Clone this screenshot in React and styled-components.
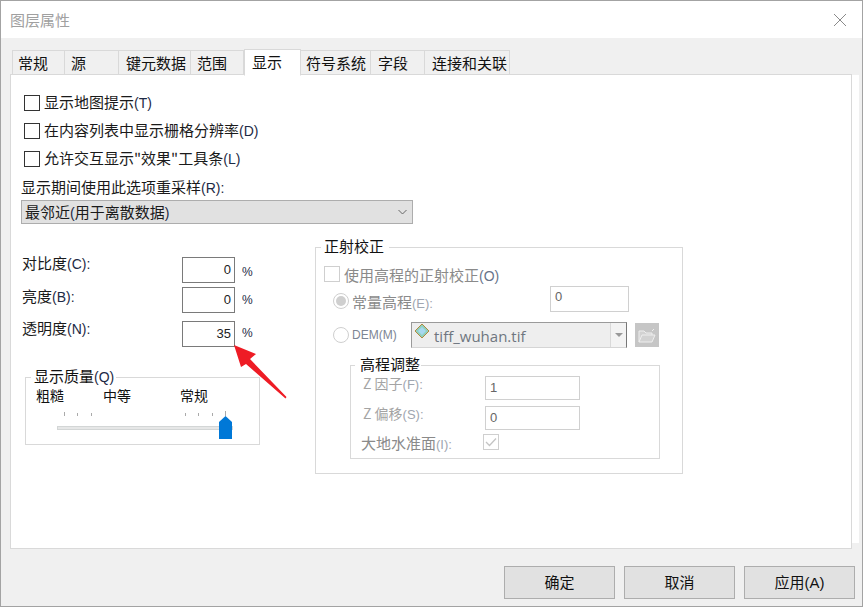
import React from "react";
import styled, { createGlobalStyle } from "styled-components";

const Global = createGlobalStyle`
  html, body { margin: 0; padding: 0; background: #f0f0f0; }
  body { font-family: "Noto Sans CJK SC", "Liberation Sans", sans-serif; font-size: 15px; color: #1a1a1a; text-autospace: no-autospace; }
  * { box-sizing: border-box; }
`;

const Win = styled.div`
  width: 863px; height: 607px; position: relative; overflow: hidden;
  display: flex; flex-direction: column;
  background: #f0f0f0; border: 1px solid #a3a3a3;
`;
const EdgeLeak = styled.div`
  position: absolute; left: ${p => p.$x}px; width: ${p => p.$w}px; height: 1px;
  ${p => p.$bottom ? "bottom: -1px;" : "top: -1px;"}
  background: repeating-linear-gradient(90deg, #3a3a3a 0 5px, #8a8a8a 5px 7px, #3a3a3a 7px 11px, #a3a3a3 11px 14px);
`;
const TitleBar = styled.div`
  height: 37px; flex: none; background: #fff;
  display: flex; align-items: center; justify-content: space-between;
  padding: 0 14px 0 9px; color: #a0a0a0; line-height: 34px;
`;
const Close = styled.svg`width: 14px; height: 14px; display: block; margin-right: 1px;`;
const Tabs = styled.div`
  height: 37px; flex: none; display: flex; align-items: flex-end; padding-left: 11px; position: relative; z-index: 1;
`;
const Tab = styled.div`
  width: ${p => p.$w}px; height: ${p => p.$active ? 27 : 25}px;
  background: ${p => p.$active ? "#fff" : "#f0f0f0"};
  border: 1px solid #d9d9d9; border-left-width: ${p => p.$first || p.$active ? 1 : 0}px;
  border-bottom: ${p => p.$active ? "1px solid #fff" : "1px solid #d9d9d9"};
  margin-bottom: ${p => p.$active ? -1 : 0}px;
  padding-left: ${p => p.$pad}px; line-height: 23px; white-space: nowrap; color: #111;
`;
const Panel = styled.div`
  width: 842px; height: 475px; margin-left: 9px; flex: none; background: #fff;
  border: 1px solid #d9d9d9; margin-top: -1px; padding: 14px 0 0 10px; position: relative;
  &::after { content: ""; position: absolute; left: 100%; top: 0; width: 7px; height: 468px; background: #fff; margin-left: 1px; }
`;
const Mn = styled.span`font-family: "Liberation Sans", sans-serif; font-size: 14px; color: ${p => p.$c || "#1d2a45"};`;
const CheckRow = styled.div`
  height: 28px; display: flex; align-items: center; gap: 4px; padding-left: 3px; white-space: nowrap;
`;
const CheckText = styled.span`padding-bottom: 3px;`;
const Box = styled.span`
  width: 16px; height: 16px; flex: none; background: #fff;
  border: 1px solid ${p => p.$off ? "#cfcfcf" : "#333"}; display: flex; align-items: center; justify-content: center;
`;
const Caption = styled.div`height: 26px; line-height: 26px; margin-top: 1px; white-space: nowrap;`;
const Select = styled.div`
  width: 392px; height: 24px; background: #e1e1e1; border: 1px solid #adadad;
  display: flex; align-items: center; justify-content: space-between; padding: 0 5px 0 3px; line-height: 22px;
`;
const Columns = styled.div`display: flex; align-items: flex-start; margin-top: 23px;`;
const Left = styled.div`width: 294px; flex: none; padding-top: 10px;`;
const Field = styled.div`
  display: flex; width: 240px; height: ${p => p.$h}px; margin-bottom: ${p => p.$mb}px; align-items: flex-start;
`;
const FieldLabel = styled.div`width: 161px; padding-left: 1px; line-height: 20px; margin-top: ${p => p.$dy}px; white-space: nowrap;`;
const NumBox = styled.div`
  width: 53px; height: 26px; border: 1px solid #7a7a7a; background: #fff; text-align: right;
  padding-right: 3px; line-height: 24px; font-family: "Liberation Sans", sans-serif; font-size: 13px; color: #222;
`;
const Pct = styled.span`
  margin-left: 7px; font-family: "Liberation Sans", sans-serif; font-size: 12px; line-height: ${p => p.$lh}px; color: #1d2a45;
`;
const Quality = styled.fieldset`
  width: 235px; height: 76px; margin: 22px 0 0 4px; padding: 0; border: 1px solid #d9d9d9; min-width: 0;
`;
const Legend = styled.legend`
  margin-left: ${p => p.$ml}px; padding: 0 ${p => p.$pr}px 0 ${p => p.$pl}px; line-height: 14px; font-size: 15px; color: #111; white-space: nowrap; height: 16px;
`;
const Ends = styled.div`
  display: grid; grid-template-columns: 67px 77px auto; padding-left: 10px; margin-top: -1px; line-height: 22px; font-size: 14px; color: #111;
`;
const Slider = styled.svg`display: block; width: 233px; height: 34px; margin-top: 2px;`;
const Ortho = styled.fieldset`
  width: 368px; height: 235px; margin: -8px 0 0 0; padding: 0 0 0 8px; border: 1px solid #d9d9d9; min-width: 0; color: #8a8a8a;
`;
const OrthoCheck = styled.div`display: flex; align-items: center; gap: 4px; height: 18px; margin-top: 10px; white-space: nowrap;`;
const Row = styled.div`display: flex; align-items: center; height: ${p => p.$h}px; margin-top: ${p => p.$mt || 0}px; padding-left: 9px;`;
const Radio = styled.span`
  width: 16px; height: 16px; border-radius: 50%; border: 1px solid #cfcfcf; background: #fff; flex: none;
  display: flex; align-items: center; justify-content: center; margin: ${p => p.$dy || 0}px 3px 0 0;
  &::after { content: ""; width: 10px; height: 10px; border-radius: 50%; background: ${p => p.$on ? "#cfcfcf" : "transparent"}; }
`;
const RowLabel = styled.span`width: 198px; white-space: nowrap; padding-top: 4px;`;
const DemLabel = styled.span`width: 59px; font-family: "Liberation Sans", sans-serif; font-size: 12px; color: #7d8594;`;
const Disabled = styled.div`
  width: ${p => p.$w}px; height: ${p => p.$h || 26}px; border: 1px solid #d0d0d0; background: #fff; padding-left: 4px;
  font-family: "Liberation Sans", sans-serif; font-size: 13px; line-height: ${p => p.$lh || 22}px; color: #666;
`;
const Combo = styled.div`
  width: 216px; height: 26px; background: #eee; border: 1px solid #9a9a9a; border-bottom-color: #d5d5d5; border-right-color: #777;
  display: flex; align-items: center; color: #6f7680; font-family: "Open Sans", "Liberation Sans", sans-serif; font-size: 15px; padding-left: 1px; position: relative;
`;
const ComboText = styled.span`margin-left: 3px; padding-top: 2px;`;
const ComboIcon = styled.svg`width: 18px; height: 16px; flex: none; margin-top: -8px;`;
const ComboBtn = styled.span`
  position: absolute; right: 0; top: 0; bottom: 0; width: 16px; background: #f3f3f3; border-left: 1px solid #d9d9d9;
  display: flex; align-items: center; justify-content: center;
  &::after { content: ""; border: 4px solid transparent; border-top: 4px solid #999; border-bottom: 0; }
`;
const FolderBtn = styled.span`
  width: 24px; height: 24px; background: #c6c6c6; margin-left: 8px; display: flex; align-items: center; justify-content: center;
`;
const Adjust = styled.fieldset`
  width: 310px; height: 102px; margin: 9px 0 0 26px; padding: 0; border: 1px solid #d9d9d9; min-width: 0;
`;
const AdjustRow = styled.div`display: flex; height: ${p => p.$h}px; margin-top: ${p => p.$mt}px; align-items: flex-start;`;
const AdjustLabel = styled.span`
  width: 134px; padding-left: 12px; color: #a4a4a4; font-size: 14px; line-height: 18px; white-space: nowrap; margin-top: -2px;
`;
const GeoidLabel = styled.span`
  width: 132px; padding-left: 10px; color: #8a8a8a; font-size: 15px; line-height: 18px; white-space: nowrap;
`;
const SmallMn = styled.span`font-family: "Liberation Sans", sans-serif; font-size: 13px; color: #a0a6b0;`;
const Footer = styled.div`
  display: flex; justify-content: flex-end; gap: 9px; padding: 17px 7px 0 0;
`;
const Btn = styled.div`
  width: 111px; height: 33px; background: #e1e1e1; border: 1px solid #adadad; text-align: center; line-height: 30px; color: #111;
`;
const BtnLatin = styled.span`font-family: "Liberation Sans", sans-serif;`;
const Arrow = styled.svg`position: absolute; left: 230px; top: 343px; width: 60px; height: 60px;`;

const Check = ({ children }) => (
  <CheckRow><Box /><CheckText>{children}</CheckText></CheckRow>
);

export default function App() {
  return (
    <>
      <Global />
      <Win>
        <EdgeLeak $x={417} $w={74} />
        <EdgeLeak $x={364} $w={200} $bottom />
        <TitleBar>
          图层属性
          <Close viewBox="0 0 14 14"><path d="M1 1L13 13M13 1L1 13" stroke="#8a8a8a" strokeWidth="1" fill="none" /></Close>
        </TitleBar>
        <Tabs>
          <Tab $w={53} $pad={5} $first>常规</Tab>
          <Tab $w={54} $pad={6}>源</Tab>
          <Tab $w={72} $pad={7}>键元数据</Tab>
          <Tab $w={53} $pad={6}>范围</Tab>
          <Tab $w={57} $pad={7} $active>显示</Tab>
          <Tab $w={70} $pad={5}>符号系统</Tab>
          <Tab $w={54} $pad={7}>字段</Tab>
          <Tab $w={85} $pad={7}>连接和关联</Tab>
        </Tabs>
        <Panel>
          <Check>显示地图提示<Mn>(T)</Mn></Check>
          <Check>在内容列表中显示栅格分辨率<Mn>(D)</Mn></Check>
          <Check>允许交互显示"效果"工具条<Mn>(L)</Mn></Check>
          <Caption>显示期间使用此选项重采样<Mn>(R):</Mn></Caption>
          <Select>
            <span>最邻近<Mn>(</Mn>用于离散数据<Mn>)</Mn></span>
            <svg width="9" height="6" viewBox="0 0 9 6"><path d="M0.5 1L4.5 5L8.5 1" stroke="#666" fill="none" /></svg>
          </Select>
          <Columns>
            <Left>
              <Field $h={26} $mb={4}>
                <FieldLabel $dy={-4}>对比度<Mn>(C):</Mn></FieldLabel>
                <NumBox>0</NumBox><Pct $lh={30}>%</Pct>
              </Field>
              <Field $h={26} $mb={8}>
                <FieldLabel $dy={-1}>亮度<Mn>(B):</Mn></FieldLabel>
                <NumBox>0</NumBox><Pct $lh={26}>%</Pct>
              </Field>
              <Field $h={26} $mb={0}>
                <FieldLabel $dy={-3}>透明度<Mn>(N):</Mn></FieldLabel>
                <NumBox>35</NumBox><Pct $lh={24}>%</Pct>
              </Field>
              <Quality>
                <Legend $ml={5} $pl={3} $pr={2}>显示质量<Mn>(Q)</Mn></Legend>
                <Ends><span>粗糙</span><span>中等</span><span>常规</span></Ends>
                <Slider viewBox="0 0 233 34">
                  <g stroke="#aaa">
                    <path d="M38.5 4V8M51.5 5V8M65.5 5V8M159.5 5V8M172.5 5V8M186.5 5V8M199.5 3V8" />
                  </g>
                  <rect x="31.5" y="18.5" width="175" height="3" fill="#e6e7e7" stroke="#d3d6d6" />
                  <path d="M193 14L199.5 8L206 14V31H193Z" fill="#0078d7" />
                </Slider>
              </Quality>
            </Left>
            <Ortho>
              <Legend $ml={-3} $pl={3} $pr={5}>正射校正</Legend>
              <OrthoCheck><Box $off /><span>使用高程的正射校正<Mn $c="#67748a">(O)</Mn></span></OrthoCheck>
              <Row $h={26} $mt={3}>
                <Radio $on $dy={4} />
                <RowLabel>常量高程<SmallMn>(E):</SmallMn></RowLabel>
                <Disabled $w={79} $lh={20}>0</Disabled>
              </Row>
              <Row $h={26} $mt={10}>
                <Radio />
                <DemLabel>DEM(M)</DemLabel>
                <Combo>
                  <ComboIcon viewBox="0 0 18 16">
                    <path d="M9 1L16 8L9 15L2 8Z" fill="#8fd0c0" stroke="#b08a3e" />
                    <path d="M9 4L13 8L9 12L5 8Z" fill="#a7d8f0" />
                  </ComboIcon>
                  <ComboText>tiff_wuhan.tif</ComboText>
                  <ComboBtn />
                </Combo>
                <FolderBtn>
                  <svg width="20" height="17" viewBox="0 0 20 17">
                    <path d="M2 15V4H7L9 6H15V8M2 15L5 8H18L15 15ZM15 4L17 2" fill="#d2d2d2" stroke="#eeeeee" />
                  </svg>
                </FolderBtn>
              </Row>
              <Adjust>
                <Legend $ml={4} $pl={5} $pr={1}>高程调整</Legend>
                <AdjustRow $h={24} $mt={3}>
                  <AdjustLabel>Z 因子<SmallMn>(F):</SmallMn></AdjustLabel>
                  <Disabled $w={95} $h={24}>1</Disabled>
                </AdjustRow>
                <AdjustRow $h={24} $mt={6}>
                  <AdjustLabel>Z 偏移<SmallMn>(S):</SmallMn></AdjustLabel>
                  <Disabled $w={95} $h={24}>0</Disabled>
                </AdjustRow>
                <AdjustRow $h={18} $mt={4}>
                  <GeoidLabel>大地水准面<SmallMn>(I):</SmallMn></GeoidLabel>
                  <Box $off>
                    <svg width="12" height="10" viewBox="0 0 12 10"><path d="M1 5L4.5 8.5L11 1.5" stroke="#c4c4c4" strokeWidth="1.3" fill="none" /></svg>
                  </Box>
                </AdjustRow>
              </Adjust>
            </Ortho>
          </Columns>
        </Panel>
        <Footer>
          <Btn>确定</Btn>
          <Btn>取消</Btn>
          <Btn>应用<BtnLatin>(A)</BtnLatin></Btn>
        </Footer>
        <Arrow viewBox="0 0 60 60">
          <path d="M3 1L25 10L19 15L55.5 53L54.5 54.5L15 20L10 23Z" fill="#ee1c25" />
        </Arrow>
      </Win>
    </>
  );
}
